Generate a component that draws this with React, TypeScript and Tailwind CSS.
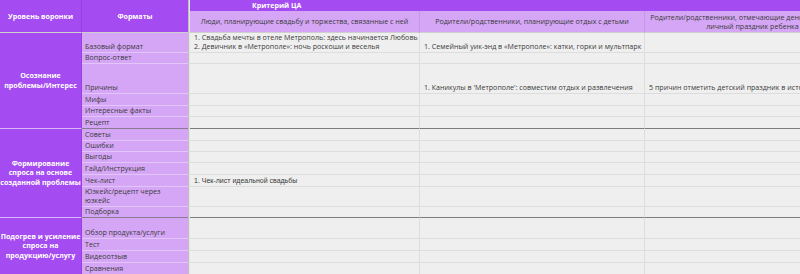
import React from "react";

type Row = {
  fmt: string[];
  c3?: string[];
  c4?: string[];
  c5?: string[];
  end?: boolean;
  arial?: boolean;
};

const sections: { title: string[]; span: string; rows: Row[] }[] = [
  {
    title: ["Осознание", "проблемы/Интерес"],
    span: "row-span-6",
    rows: [
      {
        fmt: ["Базовый формат"],
        c3: [
          "1. Свадьба мечты в отеле Метрополь: здесь начинается Любовь",
          "2. Девичник в «Метрополе»: ночь роскоши и веселья",
        ],
        c4: ["1. Семейный уик-энд в «Метрополе»: катки, горки и мультпарк"],
      },
      { fmt: ["Вопрос-ответ"] },
      {
        fmt: ["Причины"],
        c4: ["1. Каникулы в 'Метрополе': совместим отдых и развлечения"],
        c5: ["5 причин отметить детский праздник в историческом отеле"],
      },
      { fmt: ["Мифы"] },
      { fmt: ["Интересные факты"] },
      { fmt: ["Рецепт"], end: true },
    ],
  },
  {
    title: ["Формирование", "спроса на основе", "созданной проблемы"],
    span: "row-span-7",
    rows: [
      { fmt: ["Советы"] },
      { fmt: ["Ошибки"] },
      { fmt: ["Выгоды"] },
      { fmt: ["Гайд/Инструкция"] },
      { fmt: ["Чек-лист"], c3: ["1. Чек-лист идеальной свадьбы"], arial: true },
      { fmt: ["Юзкейс/рецепт через", "юзкейс"] },
      { fmt: ["Подборка"], end: true },
    ],
  },
  {
    title: ["Подогрев и усиление", "спроса на", "продукцию/услугу"],
    span: "row-span-4",
    rows: [
      { fmt: ["Обзор продукта/услуги"] },
      { fmt: ["Тест"] },
      { fmt: ["Видеоотзыв"] },
      { fmt: ["Сравнения"] },
    ],
  },
];

function Lines({ lines }: { lines?: string[] }) {
  if (!lines) return null;
  return (
    <div className="whitespace-nowrap">
      {lines.map((l) => (
        <div key={l}>{l}</div>
      ))}
    </div>
  );
}

export default function App() {
  const dataCell = (end?: boolean) =>
    end
      ? "flex items-end pl-[4px] pb-[1px] bg-[#efefef] border-r border-[#dddddd] border-b border-b-[#7c7c7c]"
      : "flex items-end pl-[4px] pb-[1px] bg-[#efefef] border-r border-[#dddddd] border-b border-b-[#dddddd]";

  return (
    <div
      className="w-[800px] h-[274px] overflow-hidden bg-[#efefef] text-[#3a3a3a] text-[7.1px] leading-[9px]"
      style={{ fontFamily: '"Open Sans", "Noto Sans", sans-serif' }}
    >
      <div className="grid w-[860px] grid-cols-[82px_106px_2px_230px_225px_215px] grid-rows-[11px_22px_20px_11px_30px_12px_11px_12px_12px_11px_11px_12px_12px_20px_11px_21px_12px_12px_12px]">
        {/* frozen divider */}
        <div className="col-start-3 row-span-full bg-[#bfbfbf] border-r border-[#e4e4e4]" />

        {/* header */}
        <div className="col-start-1 row-start-1 row-span-2 flex items-center justify-center whitespace-nowrap bg-[#a44bf2] border-r border-[#9a3fe6] border-b border-b-[#cfcfcf] font-bold text-white">
          Уровень воронки
        </div>
        <div className="col-start-2 row-start-1 row-span-2 flex items-center justify-center bg-[#a44bf2] border-b border-[#cfcfcf] font-bold text-white">
          Форматы
        </div>
        <div className="col-start-4 col-span-3 row-start-1 flex items-center pl-[62px] bg-[#a44bf2] font-bold text-white">
          Критерий ЦА
        </div>
        <div className="col-start-4 row-start-2 flex items-center justify-center whitespace-nowrap bg-[#d5a6f6] border-r border-[#c497ea] border-b border-b-[#cfcfcf]">
          Люди, планирующие свадьбу и торжества, связанные с ней
        </div>
        <div className="col-start-5 row-start-2 flex items-center justify-center whitespace-nowrap bg-[#d5a6f6] border-r border-[#c497ea] border-b border-b-[#cfcfcf]">
          Родители/родственники, планирующие отдых с детьми
        </div>
        <div className="col-start-6 row-start-2 flex items-center justify-center text-center whitespace-nowrap bg-[#d5a6f6] border-b border-[#cfcfcf]">
          <div>
            Родители/родственники, отмечающие день рождения или
            <br />
            личный праздник ребенка
          </div>
        </div>

        {/* body */}
        {sections.map((s) => (
          <React.Fragment key={s.title.join()}>
            <div
              className={`col-start-1 ${s.span} flex items-center justify-center text-center whitespace-nowrap bg-[#a44bf2] border-r border-[#9a3fe6] border-b border-b-[#d9b6f7] font-bold text-white leading-[9.5px]`}
            >
              <div>
                {s.title.map((t) => (
                  <div key={t}>{t}</div>
                ))}
              </div>
            </div>
            {s.rows.map((r) => (
              <React.Fragment key={r.fmt.join()}>
                <div
                  className={
                    r.end
                      ? "col-start-2 flex items-end pl-[3px] pb-[1px] bg-[#d5a6f6] border-b border-[#8a7a94]"
                      : "col-start-2 flex items-end pl-[3px] pb-[1px] bg-[#d5a6f6] border-b border-[#e3c6f9]"
                  }
                >
                  <Lines lines={r.fmt} />
                </div>
                <div className={`col-start-4 ${dataCell(r.end)}`}>
                  <div
                    style={
                      r.arial
                        ? { fontFamily: '"Liberation Sans", Arial, sans-serif', fontSize: "7px" }
                        : undefined
                    }
                  >
                    <Lines lines={r.c3} />
                  </div>
                </div>
                <div className={`col-start-5 ${dataCell(r.end)}`}>
                  <Lines lines={r.c4} />
                </div>
                <div className={`col-start-6 ${dataCell(r.end)}`}>
                  <Lines lines={r.c5} />
                </div>
              </React.Fragment>
            ))}
          </React.Fragment>
        ))}
      </div>
    </div>
  );
}
